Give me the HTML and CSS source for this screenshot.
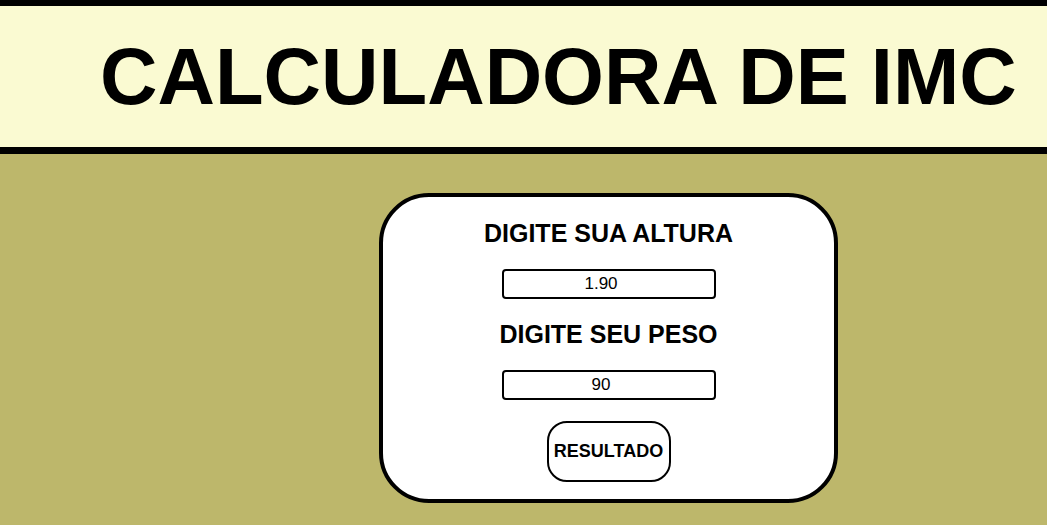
FILE: index.html
```html
<!DOCTYPE html>
<html lang="pt">
<head>
<meta charset="utf-8">
<title>Calculadora de IMC</title>
<link rel="stylesheet" href="styles.css">
</head>
<body>
<header class="topo">
  <h1 class="titulo">CALCULADORA DE IMC</h1>
</header>
<main class="area">
  <section class="cartao">
    <h2 class="rotulo">DIGITE SUA ALTURA</h2>
    <input class="campo" type="number" value="1.90">
    <h2 class="rotulo rotulo-peso">DIGITE SEU PESO</h2>
    <input class="campo campo-peso" type="number" value="90">
    <button class="botao" type="button">RESULTADO</button>
  </section>
</main>
</body>
</html>
```

FILE: styles.css
```css
html, body {
  margin: 0;
  padding: 0;
}
body {
  background: #bdb76b;
  font-family: "Liberation Sans", Arial, sans-serif;
  min-height: 525px;
}
.topo {
  background: #fafad2;
  border-top: 6px solid #000;
  border-bottom: 7px solid #000;
  height: 141px;
  display: flex;
  align-items: center;
  padding-left: 100px;
  box-sizing: content-box;
  overflow: hidden;
}
.titulo {
  margin: 0;
  font-size: 79.6px;
  font-weight: bold;
  line-height: 1;
  white-space: nowrap;
  color: #000;
}
.area {
  padding-top: 39px;
  padding-left: 379px;
}
.cartao {
  width: 451px;
  height: 302px;
  border: 4px solid #000;
  border-radius: 50px;
  background: #fff;
  display: flex;
  flex-direction: column;
  align-items: center;
  box-sizing: content-box;
}
.rotulo {
  margin: 22px 0 0;
  font-size: 25px;
  font-weight: bold;
  line-height: 28px;
  color: #000;
}
.rotulo-peso {
  margin-top: 21px;
}
.campo {
  margin-top: 22px;
  width: 214px;
  height: 30px;
  box-sizing: border-box;
  border: 2px solid #000;
  border-radius: 4px;
  background: #fff;
  text-align: center;
  font-family: "Liberation Sans", Arial, sans-serif;
  font-size: 17px;
  color: #000;
  padding: 0 2px;
}
.campo-peso {
  margin-top: 22px;
}
.botao {
  margin-top: 21px;
  width: 124px;
  height: 61px;
  box-sizing: border-box;
  border: 2px solid #000;
  border-radius: 20px;
  background: #fff;
  font-family: "Liberation Sans", Arial, sans-serif;
  font-size: 18px;
  font-weight: bold;
  color: #000;
  padding: 0;
}
```
